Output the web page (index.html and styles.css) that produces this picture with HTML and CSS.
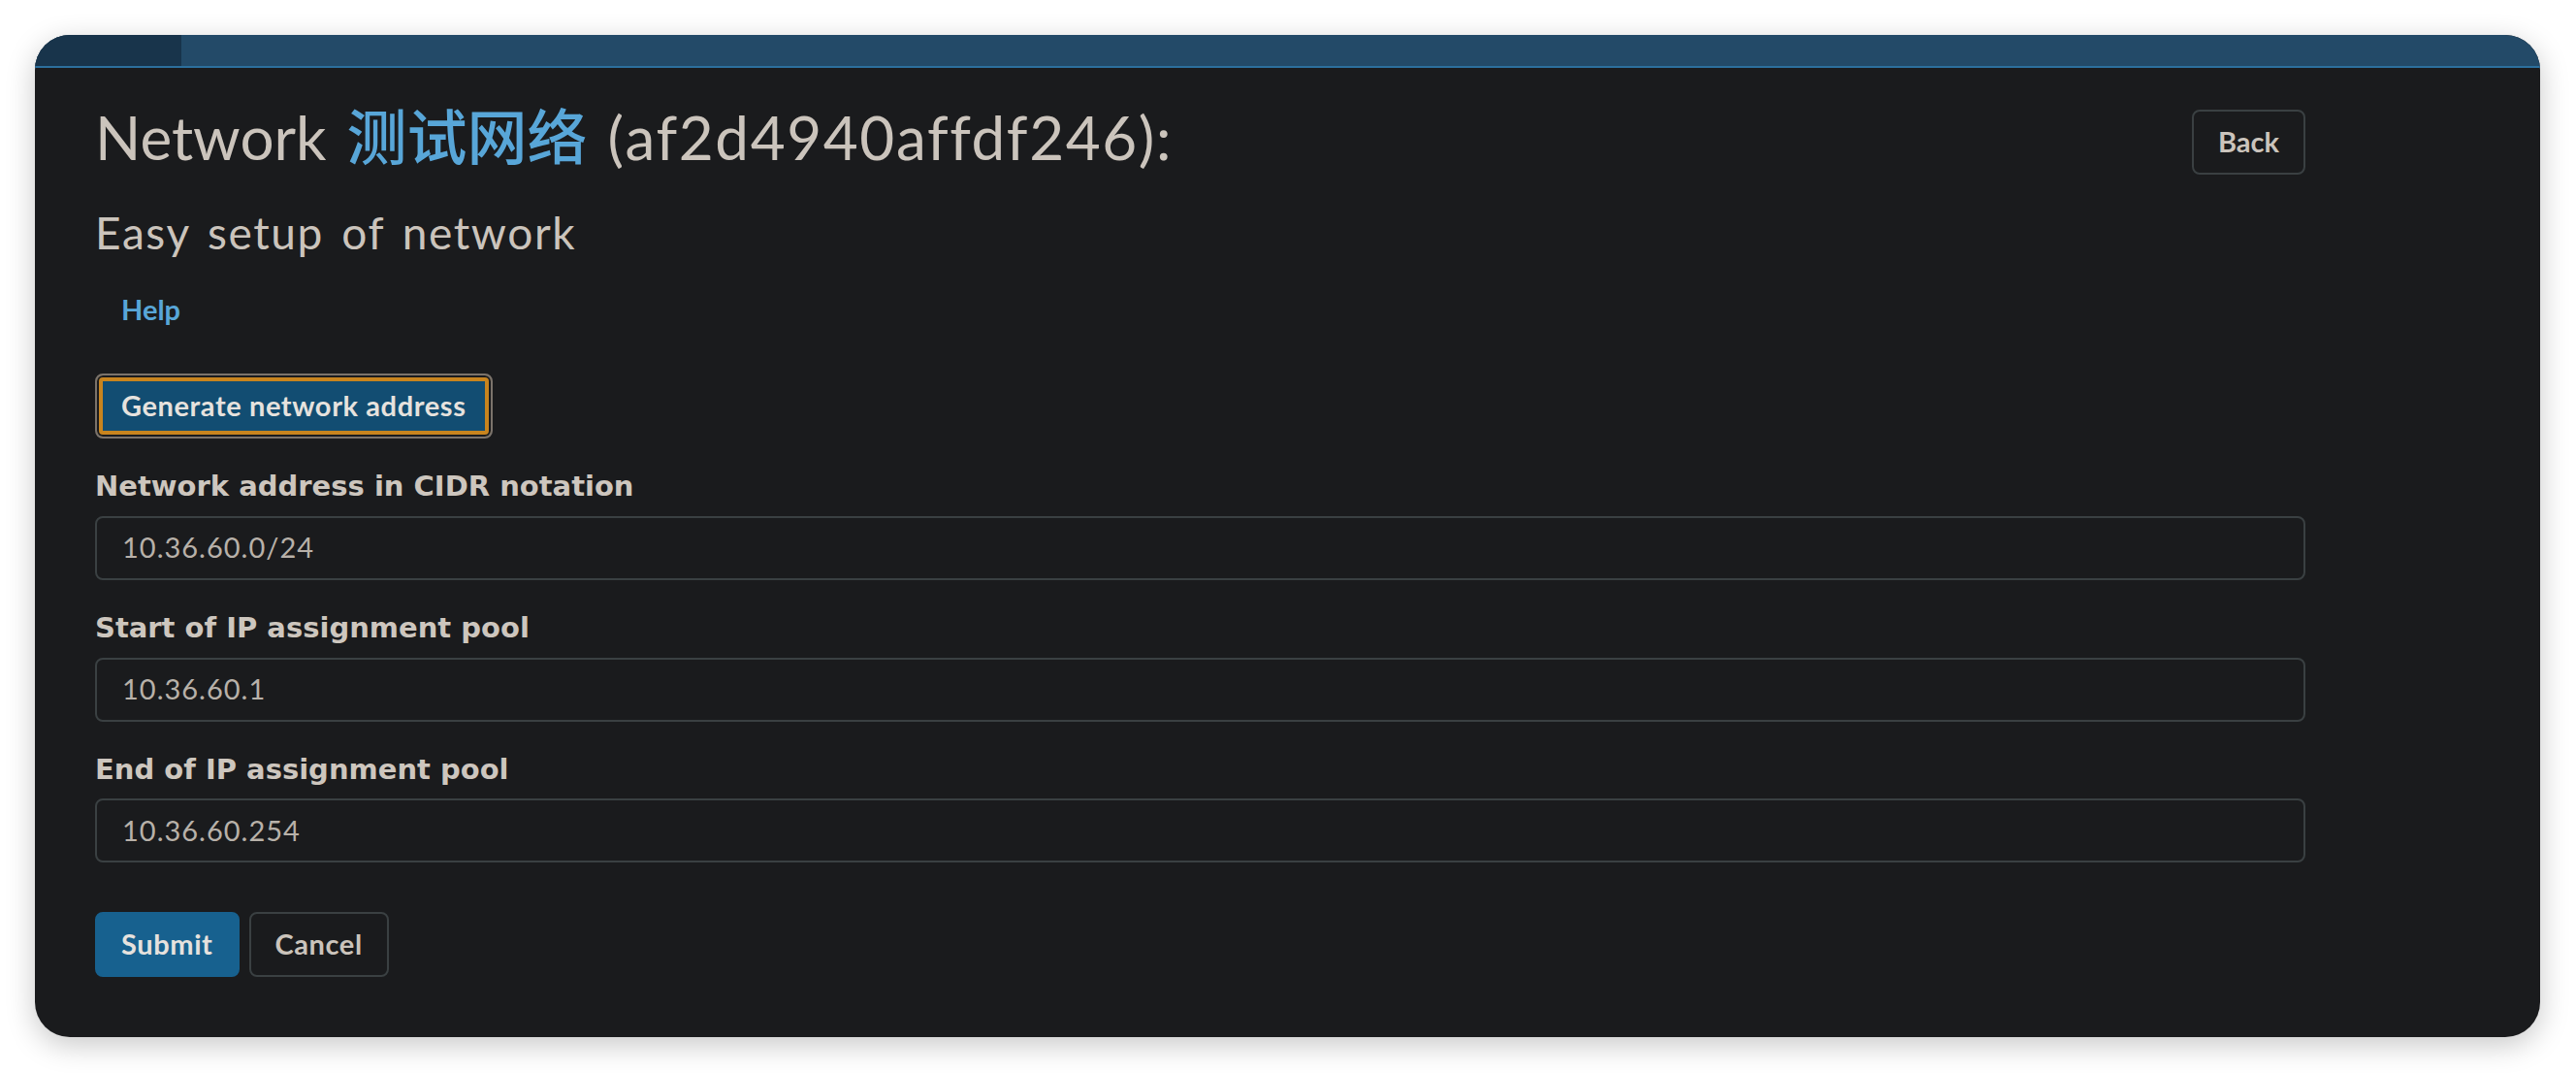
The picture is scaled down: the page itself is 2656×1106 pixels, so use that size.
FILE: index.html
```html
<!DOCTYPE html>
<html lang="en">
<head>
<meta charset="utf-8">
<title>Easy setup of network</title>
<link rel="stylesheet" href="styles.css">
</head>
<body>
<div class="window">
  <div class="titlebar"><div class="tab"></div></div>
  <div class="content">
    <div class="head-row">
      <h1 class="title">Network <span class="net-name">测试网络</span> <span class="net-id">(af2d4940affdf246):</span></h1>
      <button class="btn btn-outline back">Back</button>
    </div>
    <h2 class="subtitle">Easy setup of network</h2>
    <div class="nav"><a class="nav-link" href="#">Help</a></div>
    <button class="btn btn-generate">Generate network address</button>
    <form class="form">
      <label class="field-label">Network address in CIDR notation</label>
      <div class="input">10.36.60.0/24</div>
      <label class="field-label">Start of IP assignment pool</label>
      <div class="input">10.36.60.1</div>
      <label class="field-label">End of IP assignment pool</label>
      <div class="input">10.36.60.254</div>
      <div class="actions">
        <button type="button" class="btn btn-primary">Submit</button>
        <button type="button" class="btn btn-outline">Cancel</button>
      </div>
    </form>
  </div>
</div>
</body>
</html>
```
FILE: styles.css
```css
* { box-sizing: border-box; }
html, body { margin: 0; padding: 0; }
body {
  background: #ffffff;
  font-family: Lato, "Noto Sans CJK SC", sans-serif;
  width: 2656px;
  height: 1106px;
  padding: 36px 37px 37px 36px;
}
.window {
  height: 1033px;
  border-radius: 36px;
  background: #1a1b1d;
  overflow: hidden;
  box-shadow: 0 8px 30px rgba(0,0,0,0.22);
}
.titlebar {
  height: 34px;
  background: #234a68;
  border-bottom: 2px solid #2c6f9d;
  display: flex;
}
.tab { width: 151px; background: #18344b; }
.content {
  padding: 31px 242px 0 62px;
  color: #cbc4bc;
  font-size: 29px;
  line-height: 1.2;
}
.head-row {
  display: flex;
  justify-content: space-between;
  align-items: flex-start;
}
.title {
  margin: 0;
  font-size: 62px;
  font-weight: 400;
  line-height: 1.2;
  word-spacing: 5px;
  color: #cbc4bc;
}
.net-name { color: #58a6d8; font-family: "Noto Sans CJK SC", sans-serif; font-weight: 500; }
.net-id { letter-spacing: 1.6px; }
.subtitle {
  margin: 32px 0 0;
  font-size: 46px;
  font-weight: 400;
  line-height: 1.2;
  letter-spacing: 1.6px;
  word-spacing: 5px;
}
.nav { margin-top: 35px; padding-left: 27px; }
.nav-link { color: #58a6d8; text-decoration: none; font-weight: 700; }
.btn {
  font-family: inherit;
  font-size: 29px;
  font-weight: 700;
  line-height: 1.2;
  letter-spacing: 0.6px;
  height: 67px;
  padding: 0 25px;
  border-radius: 8px;
  border: 2px solid transparent;
  cursor: pointer;
}
.btn-outline {
  background: transparent;
  border-color: #3a4042;
  color: #cbc4bc;
}
.back { margin-top: 12px; letter-spacing: 0; }
.btn-generate {
  margin-top: 48px;
  display: block;
  background: #124d72;
  color: #e6e2de;
  border-color: #7b736b;
  box-shadow: inset 0 0 0 2px #1a1b1d, inset 0 0 0 6px #c8841e;
}
.form { display: flex; flex-direction: column; align-items: stretch; margin-top: 32px; }
.field-label {
  font-family: "DejaVu Sans", sans-serif;
  font-weight: 700;
  color: #cdc6be;
}
.input {
  margin-top: 13px;
  height: 66px;
  border: 2px solid #3a4042;
  border-radius: 8px;
  padding: 0 26px;
  display: flex;
  align-items: center;
  color: #b8b1a9;
  letter-spacing: 1px;
}
.input + .field-label { margin-top: 32px; }
.actions { display: flex; gap: 10px; margin-top: 51px; }
.btn-primary { background: #17618f; border-color: #17618f; color: #e6e2de; }
```
